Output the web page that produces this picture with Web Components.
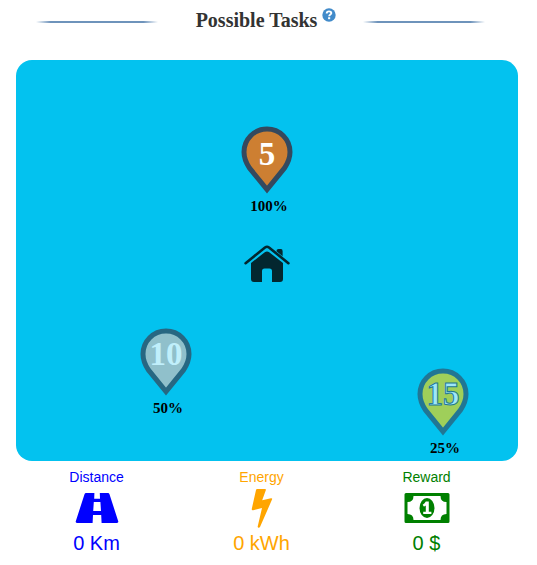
<!DOCTYPE html>
<html lang="en">
<head>
<meta charset="utf-8">
<title>Possible Tasks</title>
<style>
body { margin: 0; background: #fff; color: #333; font-family: "Liberation Sans", Arial, sans-serif; }
</style>
</head>
<body>
<task-page></task-page>
<script>
const define = (name, render) => customElements.define(name, class extends HTMLElement {
  connectedCallback() {
    if (this.shadowRoot) return;
    this.attachShadow({ mode: "open" }).innerHTML = render(this);
  }
});

define("section-title", () => `
<style>
:host { display: flex; align-items: center; height: 44px; padding: 0 52px 0 36px; }
.rule { flex: 1; height: 2px; background: linear-gradient(90deg, transparent, #6e93bb 12%, #6e93bb 88%, transparent); }
.title { display: flex; align-items: flex-start; height: 28px; gap: 5px; padding: 0 27px 0 38px; }
h1 { margin: 0; font: bold 20px/24px "Liberation Serif", "Times New Roman", serif; white-space: nowrap; }
button { display: block; width: 14px; height: 14px; padding: 0; border: 0; background: none; cursor: pointer; }
svg { display: block; }
</style>
<span class="rule"></span>
<div class="title">
  <h1><slot></slot></h1>
  <button type="button" aria-label="Help">
    <svg width="14" height="14" viewBox="0 0 14 14"><circle cx="7" cy="7" r="6.7" fill="#428bca"/>
    <path d="M4.7 5.5C4.7 3.9 5.6 3.4 7 3.4S9.3 4.1 9.3 5.2C9.3 6.6 7.2 6.5 7.2 8.2" fill="none" stroke="#fff" stroke-width="1.9"/><path d="M6.1 9.2h2.1v2H6.1z" fill="#fff"/></svg>
  </button>
</div>
<span class="rule"></span>`);

define("task-map", () => `
<style>
:host { display: block; position: relative; height: 401px; margin: 0 19px 0 16px; border-radius: 16px; background: #03c2ef; overflow: hidden; }
</style>
<slot></slot>`);

define("task-pin", el => `
<style>
:host { position: absolute; display: flex; flex-direction: column; align-items: center; width: 52px; }
svg { display: block; opacity: var(--fade, 1); }
text { font-family: "Liberation Serif", "Times New Roman", serif; font-weight: bold; font-size: 33px; stroke: var(--outline, none); fill: #fff; text-anchor: middle; }
.chance { padding: 3px 0 0 4px; font: bold 15px/18px "Liberation Serif", "Times New Roman", serif; color: #000; }
</style>
<svg width="52" height="68" viewBox="0 0 52 68">
  <path d="M26 3C13.2 3 3 13.2 3 26.1C3 32 5.1 37.2 8.6 42.2L26 63.5L43.4 42.2C46.9 37.2 49 32 49 26.1C49 13.2 38.8 3 26 3Z" fill="${el.getAttribute("fill")}" stroke="#34495e" stroke-width="5"/>
  <text x="26" y="${el.getAttribute("baseline")}">${el.getAttribute("count")}</text>
</svg>
<span class="chance"><slot></slot></span>`);

define("home-marker", () => `
<style>:host { position: absolute; } svg { display: block; }</style>
<svg width="46" height="38" viewBox="0 0 46 38" role="img" aria-label="Home">
  <path d="M1.6 18.2L21 2.5Q23 1 25 2.5L44.4 18.2" fill="none" stroke="#03272f" stroke-width="2.6" stroke-linecap="round"/>
  <path d="M32.5 6Q32.5 4 34.5 4H37Q38.6 4 38.6 6V11.2L32.5 6.3Z" fill="#03272f"/>
  <path d="M7 18L20.8 7.2Q23 5.6 25.2 7.2L39 18V34Q39 37 36 37H28V26Q28 23.5 25.5 23.5H20.5Q18 23.5 18 26V37H10Q7 37 7 34Z" fill="#03272f"/>
</svg>`);

define("task-stat", el => `
<style>
:host { display: flex; flex-direction: column; align-items: center; flex: 1; }
.label { font-size: 14px; line-height: 16px; }
.icon { display: flex; align-items: center; justify-content: center; height: 40px; margin-top: 3px; }
.value { font-size: 20px; line-height: 24px; margin-top: 3px; }
::slotted(svg) { display: block; }
</style>
<span class="label">${el.getAttribute("label")}</span>
<span class="icon"><slot></slot></span>
<span class="value">${el.getAttribute("value")}</span>`);

define("task-page", () => `
<style>
:host { display: block; }
main { padding-bottom: 8px; }
section-title { margin-bottom: 16px; }
.stats { display: flex; padding: 8px 28px 0 14px; }
.bronze { left: 225px; top: 66px; }
.silver { left: 124px; top: 268px; --fade: .75; }
.gold { left: 401px; top: 308px; --fade: .62; --outline: #34495e; }
home-marker { left: 228px; top: 185px; }
.distance { color: #00f; }
.energy { color: orange; }
.reward { color: green; }
</style>
<main>
  <section-title>Possible Tasks</section-title>
  <task-map>
    <task-pin class="bronze" fill="#cd7f32" count="5" baseline="39">100%</task-pin>
    <home-marker></home-marker>
    <task-pin class="silver" fill="#c0c0c0" count="10" baseline="37">50%</task-pin>
    <task-pin class="gold" fill="#ffd700" count="15" baseline="37">25%</task-pin>
  </task-map>
  <div class="stats">
    <task-stat class="distance" label="Distance" value="0 Km">
      <svg width="44" height="30" viewBox="0 0 44 30"><path fill="currentColor" fill-rule="evenodd" d="M11 0H19.4L19.2 5.8H25L24.8 0H33Q34 0 34.4 1L43.3 28.4Q43.6 30 42 30H26.6L26.2 22H18L17.6 30H2Q.4 30 .7 28.4L9.6 1Q10 0 11 0ZM18.8 9L18.2 18H26L25.4 9Z"/></svg>
    </task-stat>
    <task-stat class="energy" label="Energy" value="0 kWh">
      <svg width="22" height="40" viewBox="0 0 22 40"><path fill="currentColor" d="M5 2Q5.2 1 6.2 1H14Q15.3 1 14.8 2.3L11.2 12.2L20 10.2Q21.7 10 21 11.6L9 39Q8.4 40 7.4 39.8Q6.4 39.4 6.7 38.4L11 20L2.2 22.2Q.4 22.5.8 20.8Z"/></svg>
    </task-stat>
    <task-stat class="reward" label="Reward" value="0 $">
      <svg width="46" height="30" viewBox="0 0 46 30"><path fill="currentColor" fill-rule="evenodd" d="M2 0H44Q45.5 0 45.5 1.6V28.4Q45.5 30 44 30H2Q.5 30 .5 28.4V1.6Q.5 0 2 0ZM9.5 3Q9.5 9 3.5 9V21Q9.5 21 9.5 27H36.5Q36.5 21 42.5 21V9Q36.5 9 36.5 3Z"/><ellipse cx="23" cy="15" rx="7.5" ry="10" fill="currentColor"/><path fill="#fff" d="M21.8 8.5H24.8V18.7H27.4V21H19.2V18.7H21.8V12.5Q20.8 13.4 19.8 13.6L18.7 11.7Q20.8 10.6 21.8 8.5Z"/></svg>
    </task-stat>
  </div>
</main>`);
</script>
</body>
</html>
